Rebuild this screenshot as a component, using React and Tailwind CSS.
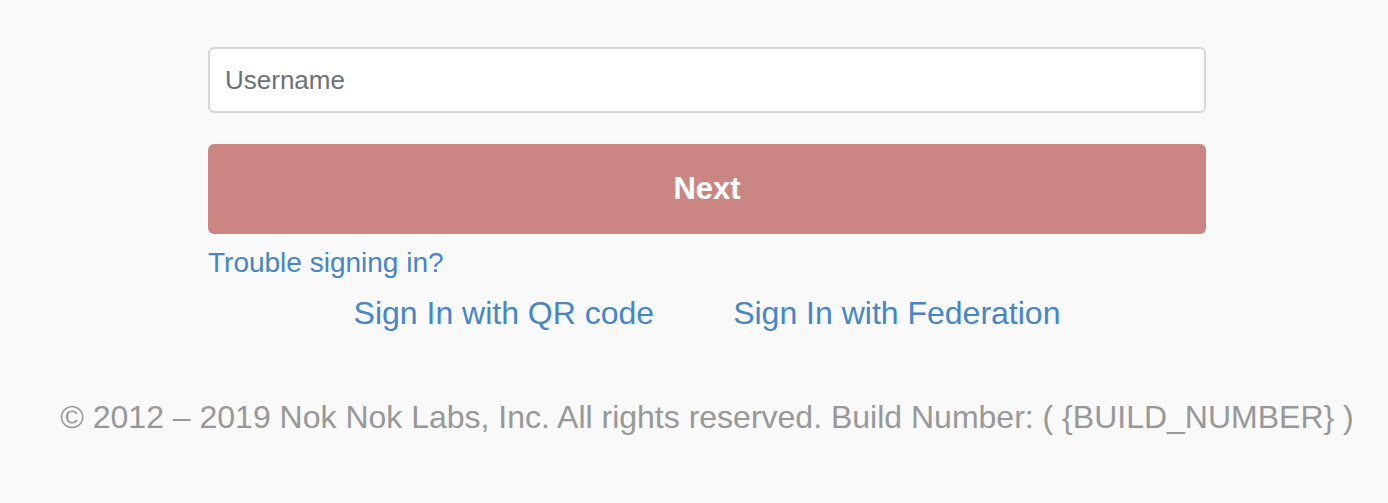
export default function App() {
  return (
    <div className="w-full h-[503px] bg-[#f9f9f9] overflow-hidden" style={{ fontFamily: '"Liberation Sans", Arial, sans-serif' }}>
      <div className="w-[998px] ml-[208px] pt-[47px] flex flex-col">
        <div className="h-[66px] bg-white border-2 border-[#d3d6d9] rounded-[6px] flex items-center px-[15px]">
          <span className="text-[26px] text-[#6c7177]">Username</span>
        </div>
        <button className="mt-[31px] h-[90px] w-full rounded-[6px] bg-[#cb8683] text-white text-[31px] font-bold flex items-center justify-center">
          Next
        </button>
        <div className="mt-[12px] h-[34px] flex items-center">
          <a className="text-[28px] text-[#4585c8] leading-none">Trouble signing in?</a>
        </div>
        <div className="mt-[17px] flex justify-center gap-[79px] leading-none">
          <a className="text-[32px] text-[#4585c8]">Sign In with QR code</a>
          <a className="text-[32px] text-[#4585c8]">Sign In with Federation</a>
        </div>
        <div className="mt-[72px] flex justify-center leading-none">
          <p className="whitespace-nowrap text-[32px] text-[#989898]">© 2012 – 2019 Nok Nok Labs, Inc. All rights reserved. Build Number: ( {'{BUILD_NUMBER}'} )</p>
        </div>
      </div>
    </div>
  );
}
